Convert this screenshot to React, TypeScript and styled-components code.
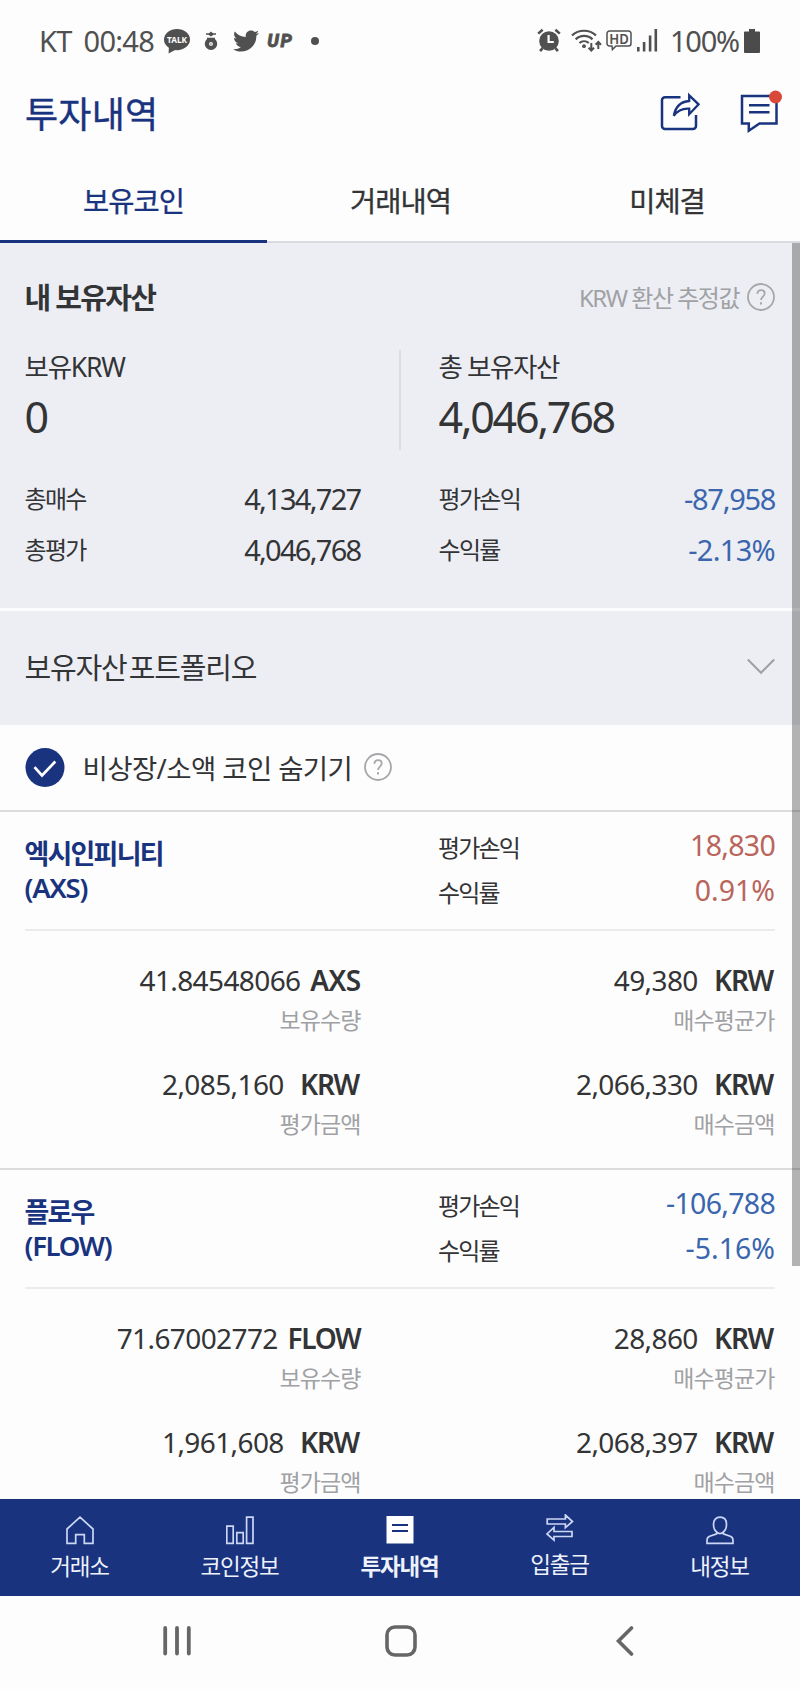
import React from "react";
import styled, { createGlobalStyle } from "styled-components";
import { FaTwitter } from "react-icons/fa";

const NAVY = "#19337f";
const INK = "#333436";
const MUTED = "#a0a1a4";
const BLUE = "#3a66ae";
const RED = "#b9655c";
const PANEL = "#edeef4";

const Global = createGlobalStyle`
  * { box-sizing: border-box; }
  body {
    margin: 0;
    background: #fdfdfd;
    color: ${INK};
    font-family: "Noto Sans", "Noto Sans CJK KR", sans-serif;
  }
`;

type TextProps = {
  $size: number;
  $track?: number;
  $line?: number;
  $color?: string;
  $weight?: number;
  $space?: number;
  $thick?: number;
};

const Text = styled.span<TextProps>`
  display: block;
  white-space: pre;
  font-size: ${(p) => p.$size}px;
  letter-spacing: ${(p) => p.$track ?? 0}px;
  word-spacing: ${(p) => p.$space ?? 0}px;
  line-height: ${(p) => p.$line ?? 40}px;
  color: ${(p) => p.$color ?? "inherit"};
  font-weight: ${(p) => p.$weight ?? 400};
  -webkit-text-stroke: ${(p) => p.$thick ?? 0}px currentColor;
`;

const Screen = styled.div`
  width: 800px;
  height: 1689px;
  display: flex;
  flex-direction: column;
  overflow: hidden;
`;

const StatusBar = styled.header`
  height: 81px;
  flex: none;
  display: flex;
  justify-content: space-between;
  padding: 0 40px 0 39px;
  color: #505050;
  svg { display: block; flex: none; }
`;

const StatusGroup = styled.div`
  display: flex;
  align-items: center;
  height: 81px;
`;

const TitleBar = styled.div`
  height: 78px;
  flex: none;
  display: flex;
  align-items: flex-start;
  justify-content: space-between;
  padding: 9px 18px 0 25px;
`;

const TitleActions = styled.div`
  display: flex;
  gap: 39px;
  svg { display: block; }
`;

const Tabs = styled.nav`
  height: 84px;
  flex: none;
  display: grid;
  grid-template-columns: 267px 267px 266px;
  border-bottom: 2px solid #d9dbe0;
`;

const Tab = styled.div<{ $active?: boolean }>`
  display: flex;
  justify-content: center;
  height: 84px;
  padding-top: 22px;
  color: ${(p) => (p.$active ? NAVY : INK)};
  border-bottom: 3px solid ${(p) => (p.$active ? NAVY : "transparent")};
`;

const Content = styled.main`
  position: relative;
  flex: 1;
  min-height: 0;
  overflow: hidden;
`;

const Scrollbar = styled.div`
  position: absolute;
  top: 0;
  right: 0;
  width: 8px;
  height: 1023px;
  background: rgba(0, 0, 0, 0.29);
`;

const Summary = styled.section`
  height: 365px;
  padding: 35px 25px 0 24.5px;
  background: ${PANEL};
`;

const SummaryHead = styled.div`
  height: 72px;
  display: flex;
  justify-content: space-between;
`;

const Hint = styled.div`
  display: flex;
  align-items: flex-start;
  gap: 8px;
  svg { display: block; margin-top: 5px; }
`;

const Totals = styled.div`
  display: grid;
  grid-template-columns: 375px 1fr;
  height: 99px;
`;

const Total = styled.div<{ $divided?: boolean }>`
  padding-left: ${(p) => (p.$divided ? 38 : 0)}px;
  border-left: ${(p) => (p.$divided ? "2px solid #dcdde2" : "none")};
  margin-left: ${(p) => (p.$divided ? -1 : 0)}px;
`;

const Figures = styled.div`
  display: grid;
  grid-template-columns: 336px 336.5px;
  column-gap: 78px;
  grid-auto-rows: 51px;
  padding-top: 30px;
`;

const Figure = styled.div`
  display: flex;
  justify-content: space-between;
`;

const Portfolio = styled.section`
  height: 117px;
  padding: 37px 25px 0 24.5px;
  display: flex;
  justify-content: space-between;
  border-top: 3px solid #fdfdfe;
  background: ${PANEL};
  svg { display: block; margin-top: 10px; }
`;

const HideRow = styled.label`
  height: 85px;
  display: flex;
  align-items: flex-start;
  padding: 23px 25px 0;
  svg { display: block; flex: none; }
  svg:last-child { margin-top: 5px; }
`;

const HideText = styled(Text)`
  flex: none;
  width: 299px;
  padding: 1px 0 0 17.5px;
`;

const Coin = styled.article`
  height: 358px;
  border-top: 2px solid #dcdcde;
  padding: 0 25px;
`;

const CoinHead = styled.div`
  height: 119px;
  display: grid;
  grid-template-columns: 413px 1fr;
  border-bottom: 2px solid #ebebed;
`;

const CoinName = styled.div`
  padding-top: 24px;
  margin-left: -0.5px;
`;

const CoinRates = styled.div`
  padding-top: 12.5px;
`;

const Rate = styled.div`
  height: 45px;
  display: flex;
  justify-content: space-between;
`;

const RateLabel = styled(Text)`
  padding-top: 3px;
`;

const Holdings = styled.div`
  display: grid;
  grid-template-columns: 336px 1fr;
  grid-auto-rows: 103.5px;
  padding-top: 30px;
`;

const Holding = styled.div`
  display: flex;
  flex-direction: column;
  align-items: flex-end;
  padding-right: 0.5px;
`;

const Amount = styled.div<{ $inset: boolean }>`
  display: flex;
  gap: 3px;
  padding-right: ${(p) => (p.$inset ? 1.5 : 0)}px;
`;

const BottomNav = styled.nav`
  height: 97px;
  flex: none;
  display: grid;
  grid-template-columns: repeat(5, 1fr);
  background: ${NAVY};
  color: #eef2fb;
`;

const NavItem = styled.div<{ $raised?: boolean }>`
  display: flex;
  flex-direction: column;
  align-items: center;
  padding: ${(p) => (p.$raised ? 14.5 : 16.5)}px 1px 0 0;
  svg { display: block; }
`;

const SystemBar = styled.footer`
  height: 93px;
  flex: none;
  display: grid;
  grid-template-columns: 354px 93px 354px;
  align-items: start;
  justify-items: center;
  padding-top: 28px;
  svg { display: block; }
`;

const Help = () => (
  <svg width="28" height="28" viewBox="0 0 28 28" fill="none" stroke="#a6a7aa" strokeWidth="1.8">
    <circle cx="14" cy="14" r="13" />
    <path d="M10.4 10.9c.1-2.300 1.600-3.700 3.700-3.700 2.200 0 3.600 1.300 3.600 3.300 0 3-3.700 3.200-3.700 6.600" />
    <path d="M14 19.300v2.200" strokeWidth="2" />
  </svg>
);

const TalkIcon = () => (
  <svg width="28" height="28" viewBox="0 0 28 28">
    <ellipse cx="14" cy="12.6" rx="13" ry="10.6" fill="#505050" />
    <path d="M6 18l-.4 8.5L14 22z" fill="#505050" />
    <text x="14" y="16" fontSize="9.5" fontWeight="700" fill="#fff" textAnchor="middle" textLength="20" lengthAdjust="spacingAndGlyphs">TALK</text>
  </svg>
);

const PouchIcon = () => (
  <svg width="14" height="20" viewBox="0 0 14 20" fill="#505050">
    <path d="M2 2.200h3L7 .600l2 1.600h3v1.500H9.600L7 5.500 4.400 3.700H2z" />
    <path fillRule="evenodd" d="M3 6.700h8v1.400a6.200 6.200 0 1 1-8 0zM7 11a1.900 1.900 0 1 0 0 3.800 1.900 1.900 0 0 0 0-3.800z" />
    <circle cx="7" cy="12.900" r=".7" />
  </svg>
);

const AlarmIcon = () => (
  <svg width="24" height="25" viewBox="0 0 24 25">
    <circle cx="12" cy="13" r="9.8" fill="#505050" />
    <path d="M1.200 5.600L5.600 1.700M22.800 5.600L18.400 1.700" stroke="#505050" strokeWidth="2.600" />
    <path d="M5.600 20.200l-2.500 3M18.400 20.200l2.500 3" stroke="#505050" strokeWidth="2.600" />
    <path d="M11.600 7v7h5.200" stroke="#fff" strokeWidth="2.200" fill="none" />
  </svg>
);

const WifiIcon = () => (
  <svg width="31" height="25" viewBox="0 0 31 25" fill="none" stroke="#505050">
    <path d="M1 7.500a17.500 17.500 0 0 1 24 0M4.700 11.400a12 12 0 0 1 16.800 0M8.400 15a7.200 7.200 0 0 1 9.400 0" strokeWidth="2.200" />
    <circle cx="13" cy="18.200" r="1.900" fill="#505050" stroke="none" />
    <path d="M20.300 15v7M17.600 19.700l2.700 2.800 2.700-2.800M27.300 21v-6.500M24.600 16.700l2.700-2.800 2.700 2.800" strokeWidth="2" />
  </svg>
);

const HdIcon = () => (
  <svg width="26" height="30" viewBox="0 -4 26 30">
    <path d="M3.500 1h19a2.500 2.500 0 0 1 2.500 2.500v10a2.500 2.500 0 0 1-2.500 2.500H10l-3.600 3.600L6 16H3.500A2.500 2.500 0 0 1 1 13.500v-10A2.500 2.500 0 0 1 3.500 1z" fill="none" stroke="#505050" strokeWidth="1.5" />
    <text x="13" y="14" fontSize="15" fontWeight="600" fill="#505050" textAnchor="middle" textLength="19.500" lengthAdjust="spacingAndGlyphs">HD</text>
  </svg>
);

const SignalIcon = () => (
  <svg width="21" height="23" viewBox="0 0 21 23" fill="#505050">
    <rect x="0" y="18" width="2.600" height="4.500" />
    <rect x="5.800" y="13" width="2.600" height="9.500" />
    <rect x="11.800" y="6.500" width="2.600" height="16" />
    <rect x="17.500" y="0" width="2.600" height="22.500" />
  </svg>
);

const BatteryIcon = () => (
  <svg width="16" height="24" viewBox="0 0 16 24" fill="#4b4b4b">
    <path d="M5 0h6v2.500h4a1 1 0 0 1 1 1V23a1 1 0 0 1-1 1H1a1 1 0 0 1-1-1V3.500a1 1 0 0 1 1-1h4z" />
  </svg>
);

const ShareIcon = () => (
  <svg width="41" height="42" viewBox="0 0 41 42" fill="none" stroke={NAVY} strokeWidth="2.500" strokeLinejoin="miter">
    <path d="M20.500 7.300H5a3 3 0 0 0-3 3V36a3 3 0 0 0 3 3h28a3 3 0 0 0 3-3V25" />
    <path d="M29.200 5.300L38.600 14.400 29.200 24.200v-5.600c-7-.5-11.600 1.700-15.400 7.200C15.400 17 20.500 11.600 29.200 11z" strokeWidth="2.300" />
  </svg>
);

const MessageIcon = () => (
  <svg width="42" height="43" viewBox="0 0 42 43" fill="none" stroke={NAVY} strokeWidth="2.500">
    <path d="M2 6h34.500v27.500H19.500l-10.700 7.200v-7.200H2z" />
    <path d="M9 15.200h20.500M9 22.200h20.500" />
    <circle cx="35.500" cy="7" r="6.500" fill="#d8493a" stroke="none" />
  </svg>
);

const icons = {
  home: <path d="M1 13L14 1.200 27 13v14.300h-8.700v-8.600H9.700v8.600H1z" />,
  chart: <path d="M.8 10.200h6.400v17.100H.8zM10.800 16.700h6.400v10.600h-6.400zM20.600 1.200h6.400v26.100h-6.400z" />,
  transfer: (
    <path d="M1.200 5h18.200V1L26.500 7.500l-7.100 6.200V10H1.200zM26 17.500H8v-4L1 20l7 6.200V22.500h18z" />
  ),
  user: (
    <path d="M14 1.200c4 0 6.500 2.700 6.500 7 0 3.500-1.300 6.300-3.200 7.800v1.800l7 2.500c1.800.7 2.700 2 2.700 4v3H1v-3c0-2 .9-3.300 2.700-4l7-2.500V16c-1.900-1.500-3.200-4.300-3.200-7.800 0-4.300 2.500-7 6.500-7zM10.700 16.300c2 1.500 4.600 1.500 6.600 0" />
  ),
};

const NavIcon = ({ kind }: { kind: keyof typeof icons | "ledger" }) => (
  <svg width="28" height="30" viewBox="0 0 28 30" fill="none" stroke="#cdd7f5" strokeWidth="1.700">
    {kind === "ledger" ? (
      <>
        <rect x=".5" y="0" width="27" height="27.500" fill="#fff" stroke="none" />
        <path d="M6 9h16M6 15h16" stroke={NAVY} strokeWidth="2" />
      </>
    ) : (
      icons[kind]
    )}
  </svg>
);

const totals = [
  { label: "총매수", value: "4,134,727", track: -1.7 },
  { label: "평가손익", value: "-87,958", color: BLUE, track: -1.3 },
  { label: "총평가", value: "4,046,768", track: -1.7 },
  { label: "수익률", value: "-2.13%", color: BLUE, track: -0.7 },
];

const coins = [
  {
    name: "엑시인피니티",
    code: "AXS",
    color: RED,
    profit: "18,830",
    rate: "0.91%",
    holdings: [
      ["41.84548066", "AXS", "보유수량"],
      ["49,380", "KRW", "매수평균가"],
      ["2,085,160", "KRW", "평가금액"],
      ["2,066,330", "KRW", "매수금액"],
    ],
  },
  {
    name: "플로우",
    code: "FLOW",
    color: BLUE,
    profit: "-106,788",
    rate: "-5.16%",
    holdings: [
      ["71.67002772", "FLOW", "보유수량"],
      ["28,860", "KRW", "매수평균가"],
      ["1,961,608", "KRW", "평가금액"],
      ["2,068,397", "KRW", "매수금액"],
    ],
  },
];

const navItems: { label: string; kind: keyof typeof icons | "ledger" }[] = [
  { label: "거래소", kind: "home" },
  { label: "코인정보", kind: "chart" },
  { label: "투자내역", kind: "ledger" },
  { label: "입출금", kind: "transfer" },
  { label: "내정보", kind: "user" },
];

const StatusLeft = styled(StatusGroup)`
  svg:nth-of-type(1) { margin-left: 9px; }
  svg:nth-of-type(2) { margin-left: 13px; }
  svg:nth-of-type(3) { margin-left: 15px; }
`;

const UpMark = styled.span`
  margin: 0 0 0 8px;
  width: 29px;
  font: italic 800 18px/40px "Roboto", sans-serif;
  letter-spacing: 1.8px;
  -webkit-text-stroke: 0.8px currentColor;
`;

const Dot = styled.i`
  width: 8px;
  height: 8px;
  margin-left: 15px;
  border-radius: 50%;
  background: #505050;
`;

const StatusRight = styled(StatusGroup)`
  svg:nth-of-type(2) { margin-left: 10px; }
  svg:nth-of-type(3) { margin-left: 4px; }
  svg:nth-of-type(4) { margin: 0 12px 0 5px; }
  svg:nth-of-type(5) { margin-left: 5px; }
`;

export default function App() {
  return (
    <Screen>
      <Global />
      <StatusBar>
        <StatusLeft>
          <Text $size={29} $track={-0.7} $space={5} $weight={370}>KT 00:48</Text>
          <TalkIcon />
          <PouchIcon />
          <FaTwitter size={26} />
          <UpMark>UP</UpMark>
          <Dot />
        </StatusLeft>
        <StatusRight>
          <AlarmIcon />
          <WifiIcon />
          <HdIcon />
          <SignalIcon />
          <Text $size={29} $track={-1.2} $weight={370}>100%</Text>
          <BatteryIcon />
        </StatusRight>
      </StatusBar>

      <TitleBar>
        <Text $size={36} $track={0.2} $line={49} $color={NAVY} $thick={0.4}>투자내역</Text>
        <TitleActions>
          <ShareIcon />
          <MessageIcon />
        </TitleActions>
      </TitleBar>

      <Tabs>
        <Tab $active><Text $size={28.5} $track={-1} $thick={0.3}>보유코인</Text></Tab>
        <Tab><Text $size={28.5} $track={-1} $thick={0.3}>거래내역</Text></Tab>
        <Tab><Text $size={28.5} $track={-1} $thick={0.3}>미체결</Text></Tab>
      </Tabs>

      <Content>
        <Summary>
          <SummaryHead>
            <Text $size={29} $track={-1.7} $weight={700}>내 보유자산</Text>
            <Hint>
              <Text $size={24} $track={-1.5} $color={MUTED}>KRW 환산 추정값</Text>
              <Help />
            </Hint>
          </SummaryHead>
          <Totals>
            <Total>
              <Text $size={26.5} $track={-1.2} $line={34}>보유KRW</Text>
              <Text $size={43} $track={-2} $line={66}>0</Text>
            </Total>
            <Total $divided>
              <Text $size={26.5} $track={-1.4} $line={34}>총 보유자산</Text>
              <Text $size={43} $track={-2.2} $line={66}>4,046,768</Text>
            </Total>
          </Totals>
          <Figures>
            {totals.map((t) => (
              <Figure key={t.label}>
                <Text $size={24} $track={-1.7}>{t.label}</Text>
                <Text $size={29} $track={t.track} $color={t.color}>{t.value}</Text>
              </Figure>
            ))}
          </Figures>
        </Summary>

        <Portfolio>
          <Text $size={29} $track={-1.2} $space={-4}>보유자산 포트폴리오</Text>
          <svg width="28" height="17" viewBox="0 0 28 17" fill="none" stroke="#9fa0a4" strokeWidth="2">
            <path d="M.8 1.500L14 14.800 27.200 1.500" />
          </svg>
        </Portfolio>

        <HideRow>
          <svg width="40" height="40" viewBox="0 0 40 40">
            <circle cx="20" cy="19.500" r="19.500" fill={NAVY} />
            <path d="M9.500 19.200l7.500 8.300 13.300-14" fill="none" stroke="#fff" strokeWidth="2.700" />
          </svg>
          <HideText $size={27.5} $track={-0.6}>비상장/소액 코인 숨기기</HideText>
          <Help />
        </HideRow>

        {coins.map((c) => (
          <Coin key={c.code}>
            <CoinHead>
              <CoinName>
                <Text $size={27} $track={-1.8} $line={35} $weight={600} $color={NAVY}>{c.name}</Text>
                <Text $size={27.5} $track={-1.3} $line={33} $weight={600} $color={NAVY}>({c.code})</Text>
              </CoinName>
              <CoinRates>
                <Rate>
                  <RateLabel $size={24} $track={-1.8}>평가손익</RateLabel>
                  <Text $size={28.5} $track={-0.7} $color={c.color}>{c.profit}</Text>
                </Rate>
                <Rate>
                  <RateLabel $size={24} $track={-1.8}>수익률</RateLabel>
                  <Text $size={28.5} $track={0} $color={c.color}>{c.rate}</Text>
                </Rate>
              </CoinRates>
            </CoinHead>
            <Holdings>
              {c.holdings.map(([value, unit, label]) => (
                <Holding key={label}>
                  <Amount $inset={unit === "KRW"}>
                    <Text $size={28} $track={-0.6} $line={39}>{value + (unit === "KRW" ? "  " : " ")}</Text>
                    <Text $size={28} $track={unit === "AXS" ? -0.6 : -1.3} $line={39} $weight={600}>{unit}</Text>
                  </Amount>
                  <Text $size={23} $track={-0.9} $color={MUTED}>{label}</Text>
                </Holding>
              ))}
            </Holdings>
          </Coin>
        ))}
        <Scrollbar />
      </Content>

      <BottomNav>
        {navItems.map((n) => (
          <NavItem key={n.kind} $raised={n.kind === "transfer"}>
            <NavIcon kind={n.kind} />
            <Text $size={22.5} $track={-1.2} $line={41} $weight={n.kind === "ledger" ? 700 : 400}>{n.label}</Text>
          </NavItem>
        ))}
      </BottomNav>

      <SystemBar>
        <svg width="32" height="34" viewBox="0 0 32 34" stroke="#666" strokeWidth="3.800" strokeLinecap="round">
          <path d="M4.200 4v25.500M16 4v25.500M27.800 4v25.500" />
        </svg>
        <svg width="34" height="34" viewBox="0 0 34 34" fill="none" stroke="#666" strokeWidth="3.600">
          <rect x="3" y="3" width="28" height="28" rx="8" />
        </svg>
        <svg width="20" height="34" viewBox="0 0 20 34" fill="none" stroke="#666" strokeWidth="3.600" strokeLinecap="round">
          <path d="M17.500 4L4.500 17l13 13" />
        </svg>
      </SystemBar>
    </Screen>
  );
}
